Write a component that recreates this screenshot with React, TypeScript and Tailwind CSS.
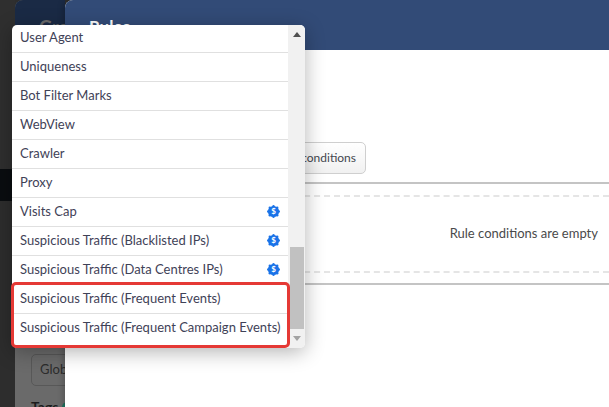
const font = "[font-family:Lato,'Liberation_Sans',sans-serif]";

const items = [
    { name: "User Agent", h: "h-[28px]" },
    { name: "Uniqueness" },
    { name: "Bot Filter Marks" },
    { name: "WebView" },
    { name: "Crawler" },
    { name: "Proxy" },
    { name: "Visits Cap", paid: true },
    { name: "Suspicious Traffic (Blacklisted IPs)", paid: true },
    { name: "Suspicious Traffic (Data Centres IPs)", paid: true },
    { name: "Suspicious Traffic (Frequent Events)" },
    { name: "Suspicious Traffic (Frequent Campaign Events)", last: true },
];

function PaidBadge() {
    return (
        <svg width="13" height="13" viewBox="0 0 13 13" className="shrink-0">
            <circle cx="6.5" cy="6.5" r="5.6" fill="#1a73e8" />
            {[[6.5, 1.2], [10.2, 2.8], [11.8, 6.5], [10.2, 10.2], [6.5, 11.8], [2.8, 10.2], [1.2, 6.5], [2.8, 2.8]].map(([x, y]) => (
                <circle key={`${x}-${y}`} cx={x} cy={y} r="1.2" fill="#1a73e8" />
            ))}
            <text x="6.5" y="9.4" textAnchor="middle" fontSize="8" fontWeight="700" fill="#fff" fontFamily="Lato, sans-serif">$</text>
        </svg>
    );
}

function Dropdown() {
    return (
        <div className="absolute left-[12px] top-[25px] w-[293px] h-[323px] flex bg-white rounded-[5px] overflow-hidden shadow-[0_4px_20px_rgba(0,0,0,0.3)]">
            <div className="w-[276px] shrink-0 flex flex-col">
                {items.map((item) => (
                    <div
                        key={item.name}
                        className={`${item.h ?? "h-[29px]"} shrink-0 flex items-center justify-between pl-[8px] pr-[8px] pb-[1px] text-[13px] text-[#3f4257] ${item.last ? "" : "border-b border-[#e0e0e0]"}`}
                    >
                        <span className="whitespace-nowrap">{item.name}</span>
                        {item.paid && <PaidBadge />}
                    </div>
                ))}
            </div>
            <div className="w-[17px] shrink-0 bg-[#f1f1f1] flex flex-col items-center py-[7px]">
                <div className="w-0 h-0 border-x-[4px] border-x-transparent border-b-[5px] border-b-[#505050]" />
                <div className="w-[14px] h-[82px] bg-[#c1c1c1] mt-auto mb-[7px]" />
                <div className="w-0 h-0 border-x-[4px] border-x-transparent border-t-[5px] border-t-[#a3a3a3]" />
            </div>
        </div>
    );
}

function App() {
    return (
        <div className={`relative w-[609px] h-[407px] overflow-hidden flex bg-[#2d2d2d] ${font}`}>
            <div className="w-[15px] shrink-0 flex flex-col">
                <div className="h-[169px] bg-[#2f2f2f]" />
                <div className="h-[32px] bg-[#0a0d10]" />
            </div>
            <div className="w-[50px] shrink-0 flex flex-col bg-[#6a6a6a] rounded-tl-[8px]">
                <div className="h-[50px] bg-[#1a2a45] rounded-tl-[8px] pl-[24px] pt-[15px] text-[18px] font-bold text-[#6b6b6b] leading-[24px] overflow-hidden whitespace-nowrap">Gro</div>
                <div className="flex-1 pl-[16px] pt-[304px] overflow-hidden">
                    <div className="w-[60px] h-[32px] border border-[#585858] rounded-[5px] flex items-center pl-[8px] text-[13px] text-[#2c2c2c] whitespace-nowrap">Global</div>
                    <div className="pt-[10px] flex items-center gap-[3px] text-[14px] font-bold text-[#1c1c1c] whitespace-nowrap">
                        Tags
                        <span className="w-[10px] h-[10px] rounded-full bg-[#1f6f5c] shrink-0" />
                    </div>
                </div>
            </div>
            <div className="relative flex-1 flex flex-col rounded-tl-[8px] bg-white overflow-hidden shadow-[-2px_0_6px_rgba(0,0,0,0.2)]">
                <div className="h-[50px] shrink-0 bg-[#324b77] pl-[24px] pt-[15px] text-[17px] font-bold text-white leading-[24px]">Rules</div>
                <div className="h-[92px] shrink-0" />
                <div className="h-[32px] shrink-0 flex justify-end w-[301px]">
                    <div className="px-[9px] flex items-center text-[12px] text-[#44474f] border border-[#cfcfcf] rounded-[5px] bg-gradient-to-b from-white to-[#f1f1f1]">
                        Rule conditions
                    </div>
                </div>
                <div className="mt-[8px] h-[103px] shrink-0 border-y-2 border-[#c4c4c4] pt-[11px] pb-[10px]">
                    <div className="h-full border-y-2 border-dashed border-[#e5e5e5] flex items-center justify-end pr-[11px] text-[13px] text-[#4a4a4a]">
                        Rule conditions are empty
                    </div>
                </div>
            </div>
            <Dropdown />
            <div className="absolute left-[11px] top-[282px] w-[279px] h-[66px] border-[3px] border-[#e53935] rounded-[5px]" />
        </div>
    );
}

export default App;
